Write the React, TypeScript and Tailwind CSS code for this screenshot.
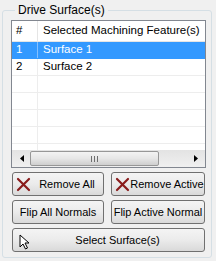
import React from "react";

const XIcon = () => (
  <svg width="15" height="15" viewBox="0 0 15 15" className="shrink-0">
    <path d="M2 2 L13 13 M13 2 L2 13" stroke="#8a1c1c" strokeWidth="2.2" strokeLinecap="round" />
  </svg>
);

const CursorIcon = () => (
  <svg width="12" height="16" viewBox="0 0 12 16" className="mt-[3px] shrink-0">
    <path d="M1 1 L1 13 L4 10 L6.5 15 L8.5 14 L6 9 L10 9 Z" fill="#fff" stroke="#000" strokeWidth="1" strokeLinejoin="round" />
  </svg>
);

function Btn({ icon, children, className }: { icon?: React.ReactNode; children: React.ReactNode; className?: string }) {
  return (
    <div
      className={
        "flex h-[24px] items-center rounded-[3px] border border-[#707070] bg-gradient-to-b from-[#f4f4f4] via-[#ebebeb] to-[#d9d9d9] text-[11px] text-black " +
        (className ?? "")
      }
    >
      {icon ? <div className="flex w-[18px] shrink-0 items-center justify-end">{icon}</div> : null}
      <div className="flex-1 text-center leading-none whitespace-nowrap">{children}</div>
    </div>
  );
}

export default function App() {
  const rows = ["Surface 1", "Surface 2", "", "", "", "", ""];
  return (
    <div
      className="h-[261px] w-[216px] bg-[#f0f0f0] pt-[3px] pl-[2px]"
      style={{ fontFamily: '"Liberation Sans", Arial, sans-serif' }}
    >
      <fieldset className="h-[255px] w-[210px] rounded-[3px] border border-[#d5dfe5] pl-[8px]">
        <legend className="ml-[4px] px-[3px] text-[12px] leading-[14px] text-black">Drive Surface(s)</legend>
        <div className="mt-[3px] flex h-[148px] w-[195px] flex-col border border-[#828790] bg-white">
          <div className="flex h-[21px] shrink-0 border-b border-[#e5e5e5] text-[11.5px] text-black">
            <div className="flex w-[26px] shrink-0 items-center border-r border-[#e5e5e5] pl-[4px]">#</div>
            <div className="flex min-w-0 flex-1 items-center overflow-hidden pl-[5px] whitespace-nowrap">
              Selected Machining Feature(s)
            </div>
          </div>
          <div className="flex-1 overflow-hidden">
            {rows.map((r, i) => (
              <div
                key={i}
                className={
                  "flex h-[17px] border-b text-[11.5px] " +
                  (i === 0 ? "border-[#3399ff] bg-[#3399ff] text-white" : "border-[#ededed] text-black")
                }
              >
                <div
                  className={
                    "flex w-[26px] shrink-0 items-center border-r pl-[4px] " +
                    (i === 0 ? "border-[#85c0ff]" : "border-[#ededed]")
                  }
                >
                  {r ? String(i + 1) : ""}
                </div>
                <div className="flex flex-1 items-center pl-[5px]">{r}</div>
              </div>
            ))}
          </div>
          <div className="flex h-[17px] shrink-0 items-center bg-gradient-to-b from-[#e3e3e3] to-[#f0f0f0] px-[1px]">
            <div className="flex w-[17px] items-center justify-center">
              <svg width="4" height="7" viewBox="0 0 4 7">
                <path d="M4 0 L0 3.5 L4 7 Z" fill="#000" />
              </svg>
            </div>
            <div className="flex h-[15px] w-[129px] items-center justify-center rounded-[2px] border border-[#979797] bg-gradient-to-b from-[#f3f3f3] via-[#e6e6e6] to-[#cfcfcf]">
              <svg width="7" height="6" viewBox="0 0 7 6">
                <path d="M0.5 0 V6 M3.5 0 V6 M6.5 0 V6" stroke="#6e6e6e" strokeWidth="1" />
              </svg>
            </div>
            <div className="flex-1" />
            <div className="flex w-[17px] items-center justify-center">
              <svg width="4" height="7" viewBox="0 0 4 7">
                <path d="M0 0 L4 3.5 L0 7 Z" fill="#000" />
              </svg>
            </div>
          </div>
        </div>
        <div className="mt-[4px] ml-[1px] flex w-[193px] flex-col gap-[4px]">
          <div className="flex justify-between">
            <Btn icon={<XIcon />} className="w-[92px]">Remove All</Btn>
            <Btn icon={<XIcon />} className="w-[94px]">Remove Active</Btn>
          </div>
          <div className="flex justify-between">
            <Btn className="w-[92px]">Flip All Normals</Btn>
            <Btn className="w-[94px]">Flip Active Normal</Btn>
          </div>
          <Btn icon={<CursorIcon />} className="w-[193px]">Select Surface(s)</Btn>
        </div>
      </fieldset>
    </div>
  );
}
